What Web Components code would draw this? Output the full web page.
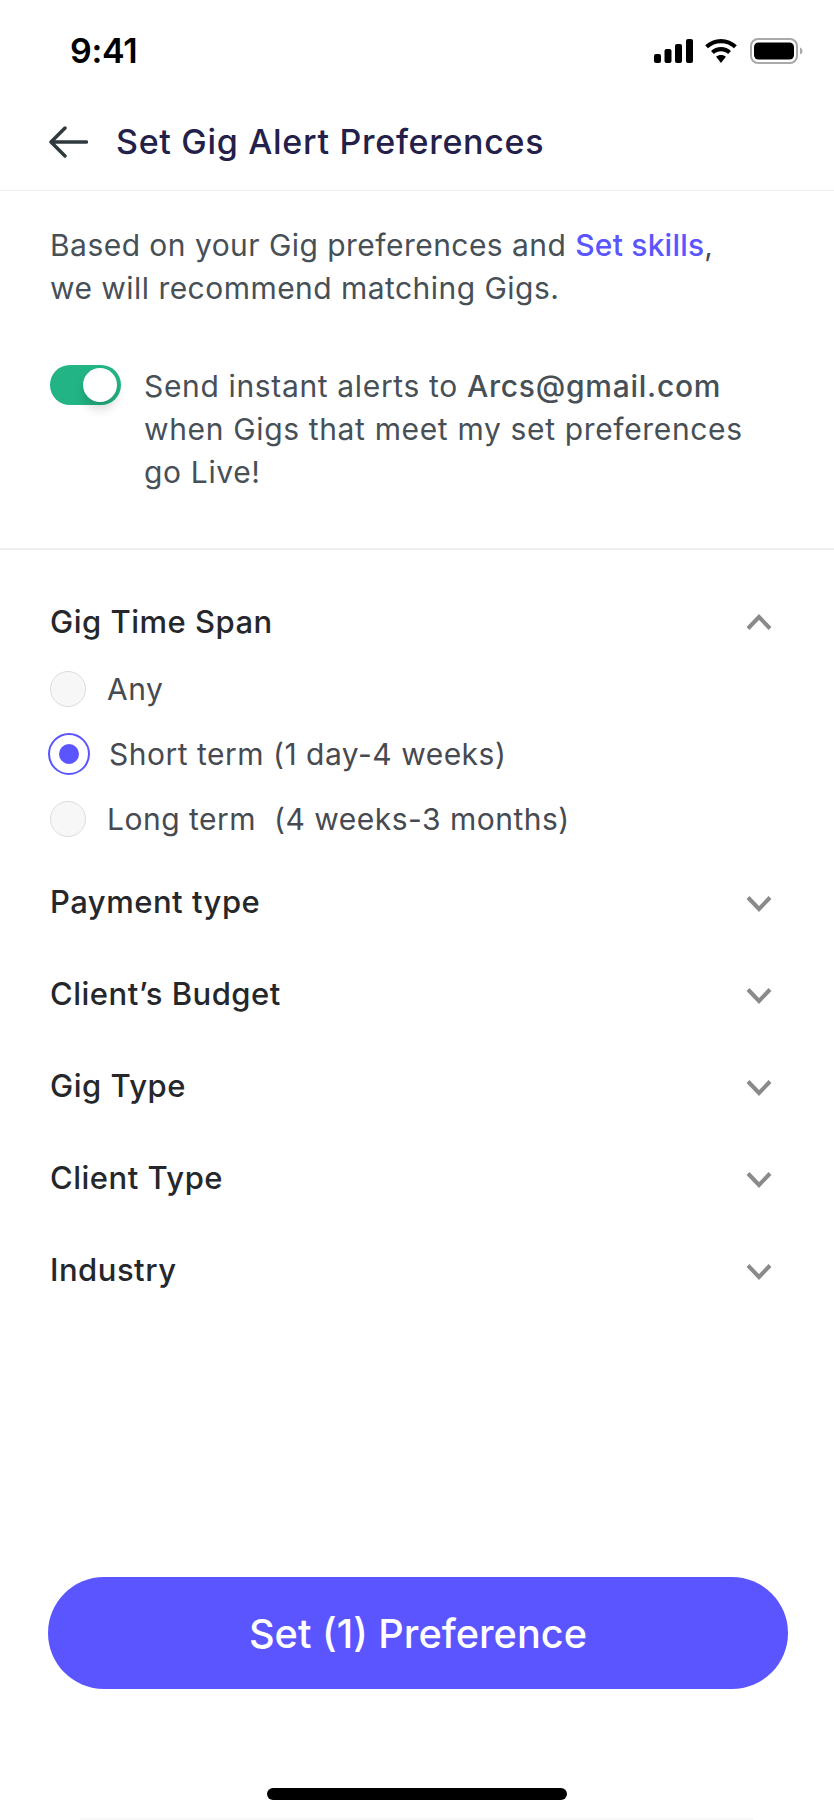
<!DOCTYPE html>
<html lang="en">
<head>
<meta charset="utf-8">
<title>Set Gig Alert Preferences</title>
<style>
  html, body { margin: 0; background: #fff; }
  body { width: 834px; height: 1820px; overflow: hidden; font-family: "Inter", "Noto Sans", sans-serif; }
</style>
</head>
<body>
<prefs-screen>
  <status-bar></status-bar>
  <page-header>Set Gig Alert Preferences</page-header>
  <intro-note>Based on your Gig preferences and <a>Set skills</a>,<br>we will recommend matching Gigs.</intro-note>
  <alert-toggle>Send instant alerts to <b>Arcs@gmail.com</b><br>when Gigs that meet my set preferences<br>go Live!</alert-toggle>
  <filter-list>
    <filter-section label="Gig Time Span" open>
      <radio-option>Any</radio-option>
      <radio-option checked>Short term (1 day-4 weeks)</radio-option>
      <radio-option>Long term&nbsp; (4 weeks-3 months)</radio-option>
    </filter-section>
    <filter-section label="Payment type"></filter-section>
    <filter-section label="Client’s Budget"></filter-section>
    <filter-section label="Gig Type"></filter-section>
    <filter-section label="Client Type"></filter-section>
    <filter-section label="Industry"></filter-section>
  </filter-list>
  <cta-button>Set (1) Preference</cta-button>
  <home-indicator></home-indicator>
</prefs-screen>

<script>
class PrefsScreen extends HTMLElement {
  constructor() {
    super();
    this.attachShadow({ mode: "open" });
    this.shadowRoot.innerHTML = `
      <style>
        :host { display: flex; flex-direction: column; width: 834px; height: 1820px; background: #fff; }
        /* faint edge under the home bar */
        :host::after { content: ""; height: 2px; margin: 0 80px; border-radius: 2px; background: #f8f8f8; }
      </style>
      <slot></slot>
    `;
  }
}

class StatusBar extends HTMLElement {
  constructor() {
    super();
    this.attachShadow({ mode: "open" });
    this.shadowRoot.innerHTML = `
      <style>
        :host { display: flex; justify-content: space-between; align-items: center; height: 100px; padding: 2px 30px 0 70px; box-sizing: border-box; }
        .time { font: 600 34px/1 "Inter", sans-serif; color: #000; letter-spacing: -0.3px; }
        .icons { display: flex; align-items: center; gap: 11px; }
        svg { display: block; }
      </style>
      <span class="time">9:41</span>
      <span class="icons">
        <svg width="39" height="24" viewBox="0 0 39 24">
          <rect x="0" y="15" width="7" height="9" rx="2"/>
          <rect x="10.500" y="10" width="7" height="14" rx="2"/>
          <rect x="21" y="5" width="7" height="19" rx="2"/>
          <rect x="32" y="0" width="7" height="24" rx="2"/>
        </svg>
        <svg width="34" height="24" viewBox="0 0 34 25">
          <path d="M17 0C10.500 0 5 2.500 0.500 6.500L3.400 9.600C7 6.300 11.700 4.300 17 4.300s10 2 13.600 5.300l2.900-3.100C29 2.500 23.500 0 17 0z"/>
          <path d="M17 8.400c-4 0-7.600 1.500-10.400 4l3 3.100c2-1.700 4.600-2.800 7.400-2.800s5.400 1.100 7.400 2.800l3-3.100c-2.800-2.500-6.400-4-10.400-4z"/>
          <path d="M17 16.600c-2 0-3.800.7-5.100 1.900L17 25l5.100-6.500c-1.300-1.200-3.100-1.900-5.100-1.900z"/>
        </svg>
        <svg width="54" height="26" viewBox="0 0 54 26" style="margin-left:1px">
          <rect x="1" y="1" width="46" height="24" rx="7" fill="none" stroke="#a9a9a9" stroke-width="2"/>
          <rect x="4" y="4.500" width="40" height="17" rx="4.500"/>
          <path d="M50 9.500c1.500.5 2.500 2 2.500 3.500s-1 3-2.500 3.500z" fill="#a9a9a9"/>
        </svg>
      </span>
    `;
  }
}

class PageHeader extends HTMLElement {
  constructor() {
    super();
    this.attachShadow({ mode: "open" });
    this.shadowRoot.innerHTML = `
      <style>
        :host { display: flex; align-items: center; gap: 28px; height: 91px; padding: 0 50px 7px 49px; box-sizing: border-box; border-bottom: 1px solid #f1f1f1; font: 500 34px/1 "Inter", sans-serif; letter-spacing: 0.7px; color: #23204a; }
        svg { display: block; flex: none; }
      </style>
      <svg width="39" height="32" viewBox="0 0 39 32" fill="none" stroke="#2f3a3f" stroke-width="3.500" stroke-linecap="round" stroke-linejoin="round">
        <path d="M37.500 16H2M16 2L2 16l14 14"/>
      </svg>
      <slot></slot>
    `;
  }
}

class IntroNote extends HTMLElement {
  constructor() {
    super();
    this.attachShadow({ mode: "open" });
    this.shadowRoot.innerHTML = `
      <style>
        :host { display: block; padding: 33px 50px 0; font: 400 30px/43px "Inter", sans-serif; letter-spacing: 0.46px; color: #474f57; }
        ::slotted(a) { color: #5b55ff; font-weight: 500; letter-spacing: 0.2px; }
      </style>
      <slot></slot>
    `;
  }
}

class AlertToggle extends HTMLElement {
  constructor() {
    super();
    this.attachShadow({ mode: "open" });
    this.shadowRoot.innerHTML = `
      <style>
        :host { display: flex; align-items: flex-start; gap: 23px; margin-top: 55px; padding: 0 50px 54px; border-bottom: 2px solid #efefef; font: 400 30px/43px "Inter", sans-serif; letter-spacing: 0.65px; color: #474f57; white-space: nowrap; }
        ::slotted(b) { font-weight: 500; letter-spacing: 0.75px; }
        .track { position: relative; flex: none; width: 71px; height: 40px; border-radius: 20px; background: #22b484; }
        .knob { position: absolute; top: 3px; right: 4px; width: 34px; height: 34px; border-radius: 50%; background: #fff; box-shadow: 0 8px 10px rgba(0,0,0,.14); }
      </style>
      <span class="track"><span class="knob"></span></span>
      <span><slot></slot></span>
    `;
  }
}

class FilterList extends HTMLElement {
  constructor() {
    super();
    this.attachShadow({ mode: "open" });
    this.shadowRoot.innerHTML = `
      <style>
        :host { display: block; padding: 26px 62px 0 50px; }
      </style>
      <slot></slot>
    `;
  }
}

class FilterSection extends HTMLElement {
  constructor() {
    super();
    this.attachShadow({ mode: "open" });
  }
  connectedCallback() {
    const open = this.hasAttribute("open");
    this.shadowRoot.innerHTML = `
      <style>
        :host { display: block; font: 500 31px/1.2 "Inter", sans-serif; letter-spacing: 0.5px; color: #25272b; }
        .head { display: flex; justify-content: space-between; align-items: center; height: 92px; }
        .body { margin-top: -12px; padding-bottom: 5px; }
        svg { display: block; }
      </style>
      <div class="head">
        <span>${this.getAttribute("label")}</span>
        <svg width="26" height="16" viewBox="0 0 26 16" fill="none" stroke="#8a8a8a" stroke-width="4" style="margin-top:${open ? 0 : 4}px">
          <path d="${open ? "M2 14.500L13 3l11 11.500" : "M2 1.500L13 13 24 1.500"}"/>
        </svg>
      </div>
      ${open ? '<div class="body"><slot></slot></div>' : ""}
    `;
  }
}

class RadioOption extends HTMLElement {
  constructor() {
    super();
    this.attachShadow({ mode: "open" });
    this.shadowRoot.innerHTML = `
      <style>
        :host { display: flex; align-items: center; gap: 21px; height: 65px; font: 400 30px/1.2 "Inter", sans-serif; letter-spacing: 0.5px; color: #474a50; }
        .dot { flex: none; box-sizing: border-box; width: 36px; height: 36px; border-radius: 50%; border: 1.500px solid #dcdcdc; background: #f7f7f7; }
        :host([checked]) .dot { width: 42px; height: 42px; margin-left: -2px; border: 2.500px solid #5b55ff; background: #fff; display: flex; align-items: center; justify-content: center; }
        :host([checked]) { gap: 19px; }
        :host([checked]) .dot::after { content: ""; width: 20px; height: 20px; border-radius: 50%; background: #5b55ff; }
      </style>
      <span class="dot"></span>
      <span><slot></slot></span>
    `;
  }
}

class CtaButton extends HTMLElement {
  constructor() {
    super();
    this.attachShadow({ mode: "open" });
    this.shadowRoot.innerHTML = `
      <style>
        :host { display: flex; align-items: center; justify-content: center; box-sizing: border-box; height: 112px; padding-top: 4px; margin: auto 46px 0 48px; border-radius: 56px; background: #5b55ff; color: #fff; font: 500 39.700px/1 "Inter", sans-serif; }
      </style>
      <slot></slot>
    `;
  }
}

class HomeIndicator extends HTMLElement {
  constructor() {
    super();
    this.attachShadow({ mode: "open" });
    this.shadowRoot.innerHTML = `
      <style>
        :host { display: block; width: 300px; height: 12px; margin: 99px auto 18px; border-radius: 6px; background: #000; }
      </style>
    `;
  }
}

customElements.define("prefs-screen", PrefsScreen);
customElements.define("status-bar", StatusBar);
customElements.define("page-header", PageHeader);
customElements.define("intro-note", IntroNote);
customElements.define("alert-toggle", AlertToggle);
customElements.define("filter-list", FilterList);
customElements.define("filter-section", FilterSection);
customElements.define("radio-option", RadioOption);
customElements.define("cta-button", CtaButton);
customElements.define("home-indicator", HomeIndicator);
</script>
</body>
</html>
